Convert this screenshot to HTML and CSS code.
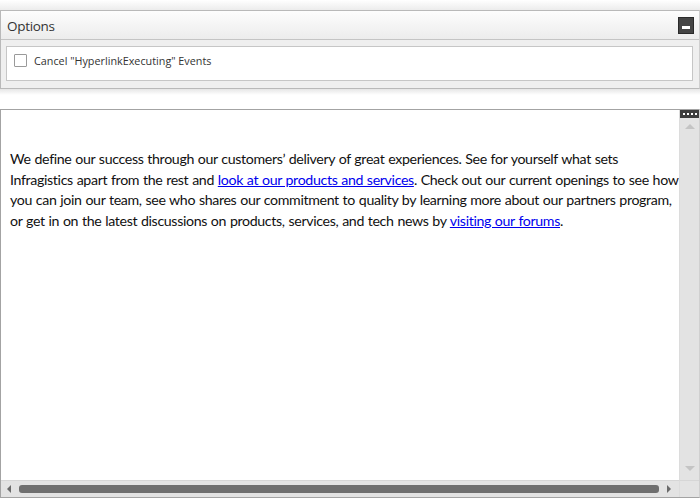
FILE: index.html
```
<!DOCTYPE html>
<html>
<head>
<meta charset="utf-8">
<link rel="stylesheet" href="styles.css">
</head>
<body>
<div class="options-wrap">
  <div class="panel">
    <div class="panel-header">
      <span class="panel-title">Options</span>
      <span class="min-btn"><span class="min-bar"></span></span>
    </div>
    <div class="panel-body">
      <div class="option-box">
        <label class="option"><span class="checkbox"></span><span class="option-text">Cancel "HyperlinkExecuting" Events</span></label>
      </div>
    </div>
  </div>
</div>
<div class="editor">
  <div class="content">
    <p class="text">We define our success through our customers’ delivery of great experiences. See for yourself what sets Infragistics apart from the rest and <a href="#">look at our products and services</a>. Check out our current openings to see how you can join our team, see who shares our commitment to quality by learning more about our partners program, or get in on the latest discussions on products, services, and tech news by <a href="#">visiting our forums</a>.</p>
  </div>
  <div class="vscroll">
    <div class="splitter"><span></span><span></span><span></span><span></span></div>
    <div class="arrow-up"></div>
    <div class="vtrack"></div>
    <div class="arrow-down"></div>
  </div>
  <div class="hscroll">
    <div class="arrow-left"></div>
    <div class="hthumb"></div>
    <div class="arrow-right"></div>
  </div>
  <div class="corner"></div>
</div>
</body>
</html>
```
FILE: styles.css
```
html, body { margin: 0; padding: 0; background: #fff; }
body { width: 700px; height: 500px; overflow: hidden; font-family: "Lato", "Noto Sans", sans-serif; }

.options-wrap {
  padding-top: 10px;
  padding-bottom: 20px;
  background: linear-gradient(#ffffff 0px, #ececec 10px, #ffffff 10px, #ffffff 89px, #e6e6e6 89px, #ffffff 95px);
}
.panel {
  border: 1px solid #b9b9b9;
  border-right-color: #cfcfcf;
  background: #efefef;
}
.panel-header {
  height: 28px;
  display: flex;
  align-items: center;
  justify-content: space-between;
  padding: 0 5px 0 6px;
  background: linear-gradient(#fdfdfd, #ececec);
  border-bottom: 1px solid #c4c4c4;
}
.panel-title {
  font-family: "Open Sans", sans-serif;
  font-size: 13.5px;
  color: #333;
  letter-spacing: -0.3px;
  padding-top: 2px;
}
.min-btn {
  width: 14px;
  background: #444;
  border: 1px solid #2a2a2a;
  display: flex;
  align-items: flex-end;
  justify-content: center;
  padding-bottom: 4px;
  box-sizing: content-box;
  height: 11px;
  margin-top: 1px;
}
.min-bar { width: 8px; height: 3px; background: #fff; }
.panel-body { padding: 6px 6px 7px 5px; }
.option-box {
  background: #fff;
  border: 1px solid #c6c6c6;
  padding: 6px 0 0 7px;
  box-sizing: content-box;
  height: 27px;
}
.option { display: flex; align-items: center; gap: 7px; }
.checkbox {
  width: 11px; height: 11px;
  border: 1px solid #9a9a9a;
  border-radius: 1px;
  background: #fff;
}
.option-text {
  font-family: "Open Sans", sans-serif;
  font-size: 10.8px;
  color: #333;
  letter-spacing: 0;
}

.editor {
  height: 387px;
  border: 1px solid #a3a3a3;
  border-right-color: #d0d0d0;
  display: grid;
  grid-template-columns: 1fr 20px;
  grid-template-rows: 1fr 17px;
}
.content { padding: 39px 0 0 9px; overflow: hidden; }
.text {
  margin: 0;
  font-family: "Lato", sans-serif;
  font-size: 14.2px;
  line-height: 20.7px;
  color: #111;
  letter-spacing: -0.35px;
  word-spacing: 0.5px;
}
.text a { color: #0000ee; text-decoration: underline; }

.vscroll {
  background: #e3e3e3;
  display: flex;
  flex-direction: column;
  align-items: center;
  border-left: 1px solid #dcdcdc;
}
.splitter {
  align-self: stretch;
  height: 8px;
  background: #3d3d3d;
  display: flex;
  justify-content: center;
  align-items: center;
  gap: 2px;
}
.splitter span { width: 2px; height: 2px; background: #fff; }
.arrow-up {
  margin-top: 6px;
  width: 0; height: 0;
  border-left: 5px solid transparent;
  border-right: 5px solid transparent;
  border-bottom: 5px solid #c4c4c4;
}
.vtrack { flex: 1; }
.arrow-down {
  margin-bottom: 9px;
  width: 0; height: 0;
  border-left: 5px solid transparent;
  border-right: 5px solid transparent;
  border-top: 5px solid #c4c4c4;
}
.hscroll {
  background: #e3e3e3;
  border-top: 1px solid #d6d6d6;
  display: flex;
  align-items: center;
  padding: 0 8px 0 6px;
  gap: 6px;
}
.arrow-left {
  width: 0; height: 0;
  border-top: 4px solid transparent;
  border-bottom: 4px solid transparent;
  border-right: 4px solid #6a6a6a;
}
.hthumb {
  flex: 1;
  height: 8px;
  background: #6f6f6f;
  border-radius: 3px;
  margin: 0 2px;
}
.arrow-right {
  width: 0; height: 0;
  border-top: 4px solid transparent;
  border-bottom: 4px solid transparent;
  border-left: 4px solid #6a6a6a;
}
.corner { background: #e3e3e3; border-top: 1px solid #d6d6d6; border-left: 1px solid #dcdcdc; }
```
